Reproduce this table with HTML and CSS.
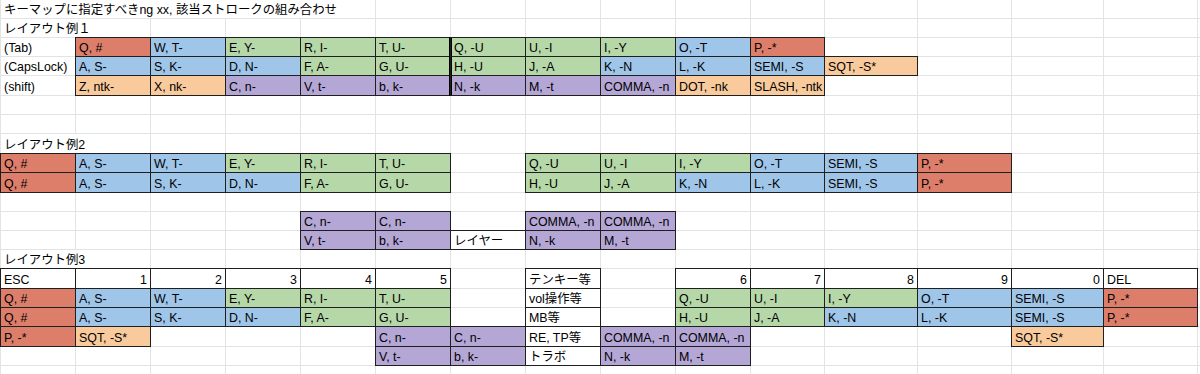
FILE: index.html
```html
<!DOCTYPE html>
<html lang="ja">
<head>
<meta charset="utf-8">
<title>キーマップ</title>
<link rel="stylesheet" href="styles.css">
</head>
<body>
<div class="sheet">
<!-- row 1 -->
<div class="c s5 jp">キーマップに指定すべきng xx, 該当ストロークの組み合わせ</div>
<div class="c"></div><div class="c"></div><div class="c"></div><div class="c"></div><div class="c"></div><div class="c"></div><div class="c"></div><div class="c"></div><div class="c"></div><div class="c"></div><div class="c"></div>
<!-- row 2 -->
<div class="c s2 jp">レイアウト例１</div>
<div class="c"></div><div class="c"></div><div class="c"></div><div class="c"></div><div class="c"></div><div class="c"></div><div class="c"></div><div class="c"></div><div class="c"></div><div class="c"></div><div class="c"></div><div class="c"></div><div class="c"></div><div class="c"></div>
<!-- row 3 -->
<div class="c">(Tab)</div>
<div class="c bd r">Q, #</div><div class="c bd b">W, T-</div><div class="c bd g">E, Y-</div><div class="c bd g">R, I-</div><div class="c bd g">T, U-</div>
<div class="c bd g tk">Q, -U</div><div class="c bd g">U, -I</div><div class="c bd g">I, -Y</div><div class="c bd b">O, -T</div><div class="c bd r">P, -*</div>
<div class="c"></div><div class="c"></div><div class="c"></div><div class="c"></div><div class="c"></div>
<!-- row 4 -->
<div class="c">(CapsLock)</div>
<div class="c bd b">A, S-</div><div class="c bd b">S, K-</div><div class="c bd b">D, N-</div><div class="c bd g">F, A-</div><div class="c bd g">G, U-</div>
<div class="c bd g tk">H, -U</div><div class="c bd g">J, -A</div><div class="c bd b">K, -N</div><div class="c bd b">L, -K</div><div class="c bd b">SEMI, -S</div><div class="c bd o">SQT, -S*</div>
<div class="c"></div><div class="c"></div><div class="c"></div><div class="c"></div>
<!-- row 5 -->
<div class="c">(shift)</div>
<div class="c bd o">Z, ntk-</div><div class="c bd o">X, nk-</div><div class="c bd p">C, n-</div><div class="c bd p">V, t-</div><div class="c bd p">b, k-</div>
<div class="c bd p tk">N, -k</div><div class="c bd p">M, -t</div><div class="c bd p">COMMA, -n</div><div class="c bd o">DOT, -nk</div><div class="c bd o">SLASH, -ntk</div>
<div class="c"></div><div class="c"></div><div class="c"></div><div class="c"></div><div class="c"></div>
<!-- row 6 -->
<div class="c"></div><div class="c"></div><div class="c"></div><div class="c"></div><div class="c"></div><div class="c"></div><div class="c"></div><div class="c"></div><div class="c"></div><div class="c"></div><div class="c"></div><div class="c"></div><div class="c"></div><div class="c"></div><div class="c"></div><div class="c"></div>
<!-- row 7 -->
<div class="c"></div><div class="c"></div><div class="c"></div><div class="c"></div><div class="c"></div><div class="c"></div><div class="c"></div><div class="c"></div><div class="c"></div><div class="c"></div><div class="c"></div><div class="c"></div><div class="c"></div><div class="c"></div><div class="c"></div><div class="c"></div>
<!-- row 8 -->
<div class="c s2 jp">レイアウト例2</div>
<div class="c"></div><div class="c"></div><div class="c"></div><div class="c"></div><div class="c"></div><div class="c"></div><div class="c"></div><div class="c"></div><div class="c"></div><div class="c"></div><div class="c"></div><div class="c"></div><div class="c"></div><div class="c"></div>
<!-- row 9 -->
<div class="c bd r">Q, #</div><div class="c bd b">A, S-</div><div class="c bd b">W, T-</div><div class="c bd g">E, Y-</div><div class="c bd g">R, I-</div><div class="c bd g">T, U-</div>
<div class="c"></div>
<div class="c bd g">Q, -U</div><div class="c bd g">U, -I</div><div class="c bd g">I, -Y</div><div class="c bd b">O, -T</div><div class="c bd b">SEMI, -S</div><div class="c bd r">P, -*</div>
<div class="c"></div><div class="c"></div><div class="c"></div>
<!-- row 10 -->
<div class="c bd r">Q, #</div><div class="c bd b">A, S-</div><div class="c bd b">S, K-</div><div class="c bd b">D, N-</div><div class="c bd g">F, A-</div><div class="c bd g">G, U-</div>
<div class="c"></div>
<div class="c bd g">H, -U</div><div class="c bd g">J, -A</div><div class="c bd b">K, -N</div><div class="c bd b">L, -K</div><div class="c bd b">SEMI, -S</div><div class="c bd r">P, -*</div>
<div class="c"></div><div class="c"></div><div class="c"></div>
<!-- row 11 -->
<div class="c"></div><div class="c"></div><div class="c"></div><div class="c"></div><div class="c"></div><div class="c"></div><div class="c"></div><div class="c"></div><div class="c"></div><div class="c"></div><div class="c"></div><div class="c"></div><div class="c"></div><div class="c"></div><div class="c"></div><div class="c"></div>
<!-- row 12 -->
<div class="c"></div><div class="c"></div><div class="c"></div><div class="c"></div>
<div class="c bd p">C, n-</div><div class="c bd p">C, n-</div>
<div class="c"></div>
<div class="c bd p">COMMA, -n</div><div class="c bd p">COMMA, -n</div>
<div class="c"></div><div class="c"></div><div class="c"></div><div class="c"></div><div class="c"></div><div class="c"></div><div class="c"></div>
<!-- row 13 -->
<div class="c"></div><div class="c"></div><div class="c"></div><div class="c"></div>
<div class="c bd p">V, t-</div><div class="c bd p">b, k-</div><div class="c bd jp">レイヤー</div><div class="c bd p">N, -k</div><div class="c bd p">M, -t</div>
<div class="c"></div><div class="c"></div><div class="c"></div><div class="c"></div><div class="c"></div><div class="c"></div><div class="c"></div>
<!-- row 14 -->
<div class="c s2 jp">レイアウト例3</div>
<div class="c"></div><div class="c"></div><div class="c"></div><div class="c"></div><div class="c"></div><div class="c"></div><div class="c"></div><div class="c"></div><div class="c"></div><div class="c"></div><div class="c"></div><div class="c"></div><div class="c"></div><div class="c"></div>
<!-- row 15 -->
<div class="c bd">ESC</div><div class="c bd num">1</div><div class="c bd num">2</div><div class="c bd num">3</div><div class="c bd num">4</div><div class="c bd num">5</div>
<div class="c"></div>
<div class="c bd jp">テンキー等</div>
<div class="c"></div>
<div class="c bd num">6</div><div class="c bd num">7</div><div class="c bd num">8</div><div class="c bd num">9</div><div class="c bd num">0</div><div class="c bd">DEL</div>
<div class="c"></div>
<!-- row 16 -->
<div class="c bd r">Q, #</div><div class="c bd b">A, S-</div><div class="c bd b">W, T-</div><div class="c bd g">E, Y-</div><div class="c bd g">R, I-</div><div class="c bd g">T, U-</div>
<div class="c"></div>
<div class="c bd jp">vol操作等</div>
<div class="c"></div>
<div class="c bd g">Q, -U</div><div class="c bd g">U, -I</div><div class="c bd g">I, -Y</div><div class="c bd b">O, -T</div><div class="c bd b">SEMI, -S</div><div class="c bd r">P, -*</div>
<div class="c"></div>
<!-- row 17 -->
<div class="c bd r">Q, #</div><div class="c bd b">A, S-</div><div class="c bd b">S, K-</div><div class="c bd b">D, N-</div><div class="c bd g">F, A-</div><div class="c bd g">G, U-</div>
<div class="c"></div>
<div class="c bd jp">MB等</div>
<div class="c"></div>
<div class="c bd g">H, -U</div><div class="c bd g">J, -A</div><div class="c bd b">K, -N</div><div class="c bd b">L, -K</div><div class="c bd b">SEMI, -S</div><div class="c bd r">P, -*</div>
<div class="c"></div>
<!-- row 18 -->
<div class="c bd r">P, -*</div><div class="c bd o">SQT, -S*</div>
<div class="c"></div><div class="c"></div><div class="c"></div>
<div class="c bd p">C, n-</div><div class="c bd p">C, n-</div><div class="c bd jp">RE, TP等</div><div class="c bd p">COMMA, -n</div><div class="c bd p">COMMA, -n</div>
<div class="c"></div><div class="c"></div><div class="c"></div>
<div class="c bd o">SQT, -S*</div>
<div class="c"></div><div class="c"></div>
<!-- row 19 -->
<div class="c"></div><div class="c"></div><div class="c"></div><div class="c"></div><div class="c"></div>
<div class="c bd p">V, t-</div><div class="c bd p">b, k-</div><div class="c bd jp">トラボ</div><div class="c bd p">N, -k</div><div class="c bd p">M, -t</div>
<div class="c"></div><div class="c"></div><div class="c"></div><div class="c"></div><div class="c"></div><div class="c"></div>
<!-- row 20 -->
<div class="c"></div><div class="c"></div><div class="c"></div><div class="c"></div><div class="c"></div><div class="c"></div><div class="c"></div><div class="c"></div><div class="c"></div><div class="c"></div><div class="c"></div><div class="c"></div><div class="c"></div><div class="c"></div><div class="c"></div><div class="c"></div>
</div>
</body>
</html>
```

FILE: styles.css
```css
html, body {
  margin: 0;
  padding: 0;
  background: #ffffff;
  overflow: hidden;
}

.sheet {
  display: grid;
  grid-template-columns: repeat(10, 74px) 73px 92px 93px 91px 93px minmax(0, 1fr);
  grid-template-rows: 18px 18px 18px 18px 19px 18px 18px 19px 18px 19px 18px 18px 18px 18px 19px 18px 18px 19px 18px 18px;
  gap: 1px;
  padding-left: 1px;
  width: 1200px;
  box-sizing: border-box;
  overflow: hidden;
  background: #e2e3e3;
  font-family: "Liberation Sans", Arial, "Noto Sans CJK JP", sans-serif;
  font-size: 12.4px;
  color: #000;
}

.c {
  background: #fff;
  display: flex;
  align-items: flex-end;
  padding: 0 3px 0 3px;
  line-height: 15px;
  white-space: nowrap;
  overflow: hidden;
  min-width: 0;
}

.s2 { grid-column: span 2; }
.s5 { grid-column: span 5; }

.jp {
  font-family: "Liberation Sans", "Noto Sans CJK JP", sans-serif;
}

.num { justify-content: flex-end; }

.bd {
  overflow: visible;
  box-shadow: 0 0 0 1px #1f1f1f;
}

.r { background: #dd7e6b; }
.b { background: #9fc5e8; }
.g { background: #b6d7a8; }
.o { background: #f9cb9c; }
.p { background: #b4a7d6; }

.tk {
  box-shadow: 0 0 0 1px #1f1f1f, -1px 0 0 1px #000, inset 1px 0 0 #000;
}
```
